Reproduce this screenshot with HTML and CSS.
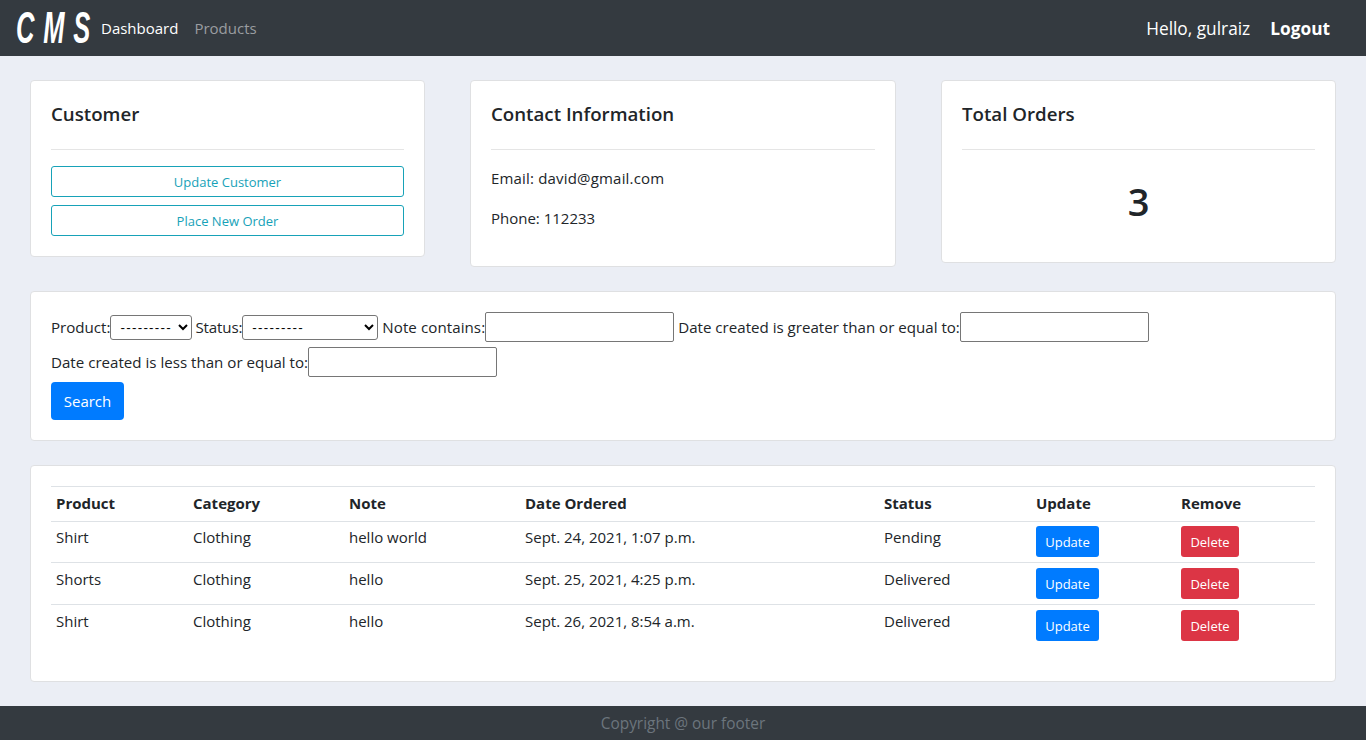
FILE: index.html
```html
<!DOCTYPE html>
<html lang="en">
<head>
  <meta charset="UTF-8" />
  <meta name="viewport" content="width=device-width, initial-scale=1" />
  <title>CMS</title>
  <link rel="stylesheet" href="styles.css">
</head>
<body>

<header class="navbar">
  <div class="brand-box"><a class="brand">C M S</a></div>
  <nav class="nav-links">
    <a class="nav-active">Dashboard</a>
    <a>Products</a>
  </nav>
  <div class="nav-user">
    <span>Hello, gulraiz</span>
    <a class="logout">Logout</a>
  </div>
</header>

<main class="content">
  <section class="top-row">
    <div class="card">
      <h5>Customer</h5>
      <hr>
      <a class="btn-outline">Update Customer</a>
      <a class="btn-outline">Place New Order</a>
    </div>
    <div class="card">
      <h5>Contact Information</h5>
      <hr>
      <p class="email">Email: david@gmail.com</p>
      <p>Phone: 112233</p>
    </div>
    <div class="card">
      <h5>Total Orders</h5>
      <hr>
      <h1 class="total">3</h1>
    </div>
  </section>

  <section class="card filter-card">
    <form>
      <div class="filter-line">
        <label>Product:</label><select class="sel-product"><option>---------</option></select>
        <label class="lbl-status">Status:</label><select class="sel-status"><option>---------</option></select>
        <label class="lbl-note">Note contains:</label><input class="inp-note" type="text">
        <label>Date created is greater than or equal to:</label><input type="text">
      </div>
      <div class="filter-line">
        <label>Date created is less than or equal to:</label><input type="text">
      </div>
      <button class="btn-search" type="button">Search</button>
    </form>
  </section>

  <section class="card table-card">
    <table>
      <colgroup>
        <col class="c-product"><col class="c-category"><col class="c-note"><col class="c-date"><col class="c-status"><col class="c-update"><col>
      </colgroup>
      <thead>
        <tr><th>Product</th><th>Category</th><th>Note</th><th>Date Ordered</th><th>Status</th><th>Update</th><th>Remove</th></tr>
      </thead>
      <tbody>
        <tr>
          <td>Shirt</td><td>Clothing</td><td>hello world</td><td>Sept. 24, 2021, 1:07 p.m.</td><td>Pending</td>
          <td><a class="btn-sm btn-blue">Update</a></td><td><a class="btn-sm btn-red">Delete</a></td>
        </tr>
        <tr>
          <td>Shorts</td><td>Clothing</td><td>hello</td><td>Sept. 25, 2021, 4:25 p.m.</td><td>Delivered</td>
          <td><a class="btn-sm btn-blue">Update</a></td><td><a class="btn-sm btn-red">Delete</a></td>
        </tr>
        <tr>
          <td>Shirt</td><td>Clothing</td><td>hello</td><td>Sept. 26, 2021, 8:54 a.m.</td><td>Delivered</td>
          <td><a class="btn-sm btn-blue">Update</a></td><td><a class="btn-sm btn-red">Delete</a></td>
        </tr>
      </tbody>
    </table>
  </section>
</main>

<footer class="footer">Copyright @ our footer</footer>

</body>
</html>
```

FILE: styles.css
```css
* {
  box-sizing: border-box;
}
body {
  margin: 0;
  background-color: #ebeef5;
  color: #212529;
  font-family: "Open Sans", "Noto Sans", sans-serif;
  font-size: 15px;
  line-height: 24px;
}

/* Navbar */
.navbar {
  display: flex;
  align-items: center;
  height: 56px;
  padding: 0 36px 0 16px;
  background-color: #343a40;
}
.brand-box {
  width: 85px;
  height: 56px;
  overflow: hidden;
}
.brand {
  display: inline-block;
  color: #fff;
  font-family: "Liberation Sans", sans-serif;
  font-size: 44px;
  font-weight: bold;
  font-style: italic;
  line-height: 56px;
  letter-spacing: 1.5px;
  white-space: nowrap;
  transform: scaleX(0.58);
  transform-origin: left center;
}
.nav-links {
  display: flex;
  gap: 16px;
  color: #9a9da0;
}
.nav-active {
  color: #fff;
}
.nav-user {
  margin-left: auto;
  padding-top: 2px;
  display: flex;
  gap: 20px;
  color: #fff;
  font-size: 17.3px;
}
.logout {
  font-weight: bold;
}

/* Layout */
.content {
  padding: 24px 30px;
}
.top-row {
  display: grid;
  grid-template-columns: 395px 426px 395px;
  gap: 45px;
  align-items: start;
  margin-bottom: 24px;
}
.card {
  padding: 20px;
  background-color: #fff;
  border: 1px solid #dfe0e2;
  border-radius: 4px;
}
h5 {
  margin: 0;
  padding-top: 1px;
  font-size: 18.7px;
  font-weight: 600;
  line-height: 24px;
}
hr {
  margin: 23px 0 16px;
  border: 0;
  border-top: 1px solid #e5e5e5;
}
p {
  margin: 0 0 16px;
}
.email {
  letter-spacing: 0.18px;
}
.btn-outline {
  display: block;
  height: 31px;
  margin-bottom: 8px;
  border: 1px solid #17a2b8;
  border-radius: 3px;
  color: #17a2b8;
  font-size: 13px;
  line-height: 31px;
  text-align: center;
}
.btn-outline:last-child {
  margin-bottom: 0;
}
.total {
  margin: 28px 0 18px;
  font-size: 38px;
  font-weight: 600;
  line-height: 46px;
  text-align: center;
}

/* Filter */
.filter-card {
  margin-bottom: 24px;
}
.filter-line {
  display: flex;
  align-items: center;
  height: 30px;
  margin-bottom: 5px;
  font-size: 15.12px;
}
.filter-line input {
  width: 189px;
  height: 30px;
  margin-right: 5px;
  border: 1px solid #767676;
  border-radius: 2px;
  background: #fff;
}
.filter-line .inp-note {
  margin-right: 4px;
}
.filter-line select {
  height: 25px;
  margin-right: 4px;
  padding-left: 5px;
  border: 1px solid #767676;
  border-radius: 3px;
  background: #fff;
  font-family: "Liberation Sans", sans-serif;
  font-size: 13.3px;
  letter-spacing: 1.3px;
}
.sel-product {
  width: 82px;
}
.sel-status {
  width: 136px;
}
.filter-line .sel-product {
  margin-right: 3px;
}
.lbl-status {
  letter-spacing: -0.15px;
}
.lbl-note {
  letter-spacing: 0.07px;
}
.btn-search {
  display: block;
  width: 73px;
  height: 38px;
  border: 0;
  border-radius: 4px;
  background-color: #007bff;
  color: #fff;
  font-family: inherit;
  font-size: 15px;
}

/* Table */
.table-card {
  height: 217px;
}
table {
  width: 100%;
  border-collapse: collapse;
  table-layout: fixed;
}
.c-product { width: 137px; }
.c-category { width: 156px; }
.c-note { width: 176px; }
.c-date { width: 359px; }
.c-status { width: 152px; }
.c-update { width: 145px; }
th, td {
  padding: 5px;
  border-top: 1px solid #dee2e6;
  text-align: left;
  vertical-align: top;
}
th {
  height: 35px;
  padding-top: 4px;
  font-weight: bold;
  border-bottom: 1px solid #dee2e6;
}
td {
  height: 42px;
  line-height: 23px;
}
tbody tr:first-child td {
  height: 41px;
  padding-top: 4px;
}
.btn-sm {
  display: inline-block;
  vertical-align: top;
  width: 63px;
  height: 31px;
  border-radius: 3px;
  color: #fff;
  font-size: 13px;
  line-height: 32px;
  text-align: center;
}
.btn-red {
  width: 58px;
  background-color: #dc3545;
}
.btn-blue {
  background-color: #007bff;
}

/* Footer */
.footer {
  height: 34px;
  background-color: #343a40;
  color: #6c757d;
  font-size: 15.4px;
  line-height: 36px;
  text-align: center;
}
```
